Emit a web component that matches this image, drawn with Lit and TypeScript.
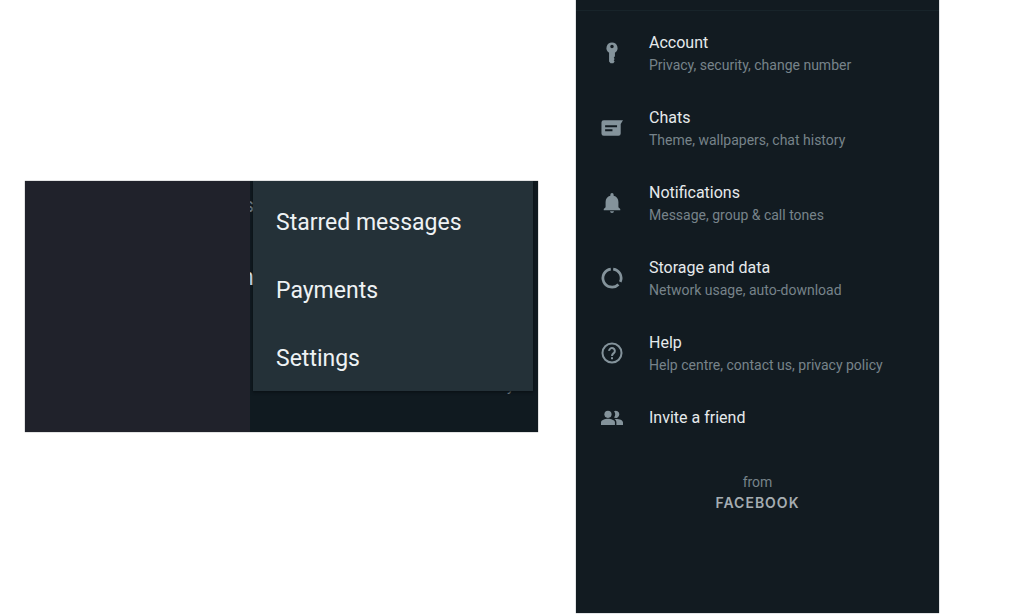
import { LitElement, html, css, svg } from "lit";
import { customElement } from "lit/decorators.js";

const icons = {
  key: svg`<path fill-rule="evenodd" d="M12 .5a6 6 0 0 0-3.200 11.100v9.600l1.600 2h3l1.500-1.800-1-1.400 1-1.500-1-1.400 1.300-1.500v-4A6 6 0 0 0 12 .5Zm0 2.400a1.900 1.900 0 1 1 0 3.800 1.900 1.900 0 0 1 0-3.800Z"/>`,
  chat: svg`<path fill-rule="evenodd" d="M3 3.500h21l-2.500 4v10.500a2.500 2.500 0 0 1-2.500 2.500h-16a2.500 2.500 0 0 1-2.500-2.500v-12a2.500 2.500 0 0 1 2.500-2.500ZM4.500 9v2.100h13v-2.100ZM4.500 13.400v2.100h8v-2.100Z"/>`,
  bell: svg`<path d="M12 23a2.200 2.200 0 0 0 2.200-2H9.800A2.200 2.200 0 0 0 12 23Zm7-6.500V11c0-3.400-1.900-6-5.200-6.800V3a1.800 1.800 0 0 0-3.600 0v1.200C6.900 5 5 7.600 5 11v5.500l-2 2V20h18v-1.500Z"/>`,
  data: svg`<g fill="none" stroke="currentColor" stroke-width="3"><path d="M13.300 2.200A9.900 9.900 0 0 1 21 16.200"/><path d="M19 19A9.900 9.900 0 1 1 10.700 2.200"/></g>`,
  help: svg`<circle cx="12" cy="12" r="10.400" fill="none" stroke="currentColor" stroke-width="2.200"/><path fill="none" stroke="currentColor" stroke-width="2.200" d="M8.900 9.700a3.100 3.100 0 1 1 5.200 2.200c-1.200 1-2.100 1.600-2.100 3.300"/><path d="M10.900 16.600h2.200v2.200h-2.200z"/>`,
  people: svg`<circle cx="7.600" cy="8" r="3.900"/><path d="M0 19.500v-2.500c0-2.900 4.500-4.100 7.600-4.100s7.600 1.200 7.600 4.100V19.500Z"/><path d="M14.200 11.400a5.600 5.600 0 0 0 0-6.800 3.900 3.900 0 1 1 0 6.800ZM16.800 19.500v-2.500c0-1.600-.7-2.900-1.900-3.800 3.400-.5 9.100.6 9.100 3.800V19.500Z"/>`,
};

const settings = [
  { icon: icons.key, title: "Account", detail: "Privacy, security, change number" },
  { icon: icons.chat, title: "Chats", detail: "Theme, wallpapers, chat history" },
  { icon: icons.bell, title: "Notifications", detail: "Message, group & call tones" },
  { icon: icons.data, title: "Storage and data", detail: "Network usage, auto-download" },
  { icon: icons.help, title: "Help", detail: "Help centre, contact us, privacy policy" },
  { icon: icons.people, title: "Invite a friend", detail: "" },
];

@customElement("overflow-menu")
export class OverflowMenu extends LitElement {
  static styles = css`
    :host {
      display: grid;
      grid-template-columns: 225fr 288fr;
      background: #101a20;
      box-shadow: 0 0 1px #53585c;
    }
    .cover { background: #20222b; }
    .pane { position: relative; overflow: hidden; padding-bottom: 41px; }
    .menu {
      position: relative;
      margin: 0 5px 0 3px;
      padding-top: 6px;
      background: #243138;
      box-shadow: 0 1px 3px #080f13;
    }
    .item {
      display: block;
      width: 100%;
      height: 68px;
      border: 0;
      padding: 3px 24px 0 23px;
      background: none;
      color: #eef2f4;
      font: 23px/32px Roboto, sans-serif;
      text-align: left;
      cursor: pointer;
    }
    .chats {
      position: absolute;
      inset: 0 auto auto 0;
      width: 4px;
      display: flex;
      flex-direction: column;
      align-items: flex-end;
      padding-top: 12px;
      color: #76828a;
      font: 20px/24px Roboto, sans-serif;
    }
    .name { margin-top: 48px; color: #e4e9ec; font-size: 24px; }
    .date {
      position: absolute;
      right: 24px;
      bottom: 36px;
      color: #7b878e;
      font: 15px/20px Roboto, sans-serif;
    }
  `;
  render() {
    return html`
      <div class="cover"></div>
      <div class="pane">
        <div class="chats" aria-hidden="true"><span>s</span><span class="name">n</span></div>
        <span class="date" aria-hidden="true">y</span>
        <nav class="menu">
          ${["Starred messages", "Payments", "Settings"].map(
            (label) => html`<button class="item" type="button">${label}</button>`
          )}
        </nav>
      </div>
    `;
  }
}

@customElement("settings-list")
export class SettingsList extends LitElement {
  static styles = css`
    :host {
      display: block;
      background: #121b21;
      box-shadow: 0 0 1px #53606a;
      font-family: Roboto, sans-serif;
    }
    .bar { height: 10px; border-bottom: 1px solid #18242a; }
    .list { padding-top: 20px; }
    .row {
      display: grid;
      grid-template-columns: 24px 1fr;
      column-gap: 25px;
      padding: 0 24px;
      margin-bottom: 31px;
      text-decoration: none;
    }
    .icon {
      width: 24px;
      height: 24px;
      align-self: center;
      display: grid;
      place-items: center;
      color: #84939b;
    }
    .icon svg { width: 22px; height: 22px; fill: currentColor; }
    .text { display: grid; }
    .title { color: #e6eaec; font-size: 16px; line-height: 24px; }
    .detail { color: #77838a; font-size: 14px; line-height: 20px; }
    .from { margin-top: 41px; text-align: center; color: #77838a; font-size: 14px; line-height: 22px; }
    .brand {
      color: #a5adb2;
      font: 600 14px/20px Inter, sans-serif;
      letter-spacing: 1px;
    }
  `;
  render() {
    return html`
      <div class="bar"></div>
      <nav class="list">
        ${settings.map(
          (s) => html`<a class="row" href="#">
            <span class="icon"><svg viewBox="0 0 24 24" aria-hidden="true">${s.icon}</svg></span>
            <span class="text">
              <span class="title">${s.title}</span>
              ${s.detail ? html`<span class="detail">${s.detail}</span>` : ""}
            </span>
          </a>`
        )}
      </nav>
      <div class="from">from<div class="brand">FACEBOOK</div></div>
    `;
  }
}

@customElement("app-root")
export class AppRoot extends LitElement {
  static styles = css`
    :host { display: block; background: #fff; }
    .page {
      box-sizing: border-box;
      min-height: 100vh;
      display: grid;
      grid-template-columns: 513fr 363fr;
      column-gap: 38px;
      padding: 0 85px 1px 25px;
    }
    .menu { align-self: center; }
  `;
  render() {
    return html`
      <main class="page">
        <overflow-menu class="menu"></overflow-menu>
        <settings-list></settings-list>
      </main>
    `;
  }
}
